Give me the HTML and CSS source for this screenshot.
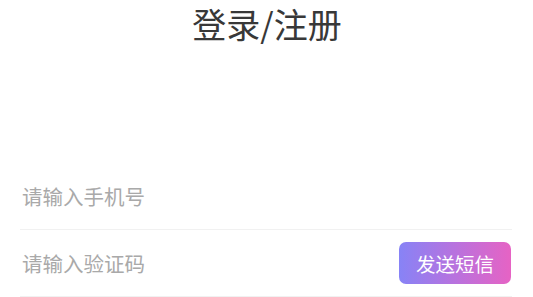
FILE: index.html
```html
<!DOCTYPE html>
<html lang="zh">
<head>
<meta charset="utf-8">
<link rel="stylesheet" href="styles.css">
</head>
<body>
<div class="page">
  <header class="title">登录/注册</header>
  <form class="form">
    <div class="row">
      <input class="field" type="text" placeholder="请输入手机号">
    </div>
    <div class="row">
      <input class="field" type="text" placeholder="请输入验证码">
      <button type="button" class="sms">发送短信</button>
    </div>
  </form>
</div>
</body>
</html>
```
FILE: styles.css
```css
html, body {
  margin: 0;
  padding: 0;
  background: #fff;
}
body {
  font-family: "Noto Sans CJK SC", "Noto Sans", sans-serif;
}
.page {
  width: 533px;
  height: 297px;
  overflow: hidden;
}
.title {
  display: flex;
  justify-content: center;
  font-size: 34px;
  line-height: normal;
  color: #383838;
  padding-left: 1px;
  margin-top: -1px;
}
.form {
  margin: 115px 21px 0 20px;
}
.row {
  height: 66px;
  border-bottom: 1px solid #f1f1f1;
  display: flex;
  align-items: center;
}
.field {
  flex: 1;
  min-width: 0;
  border: none;
  outline: none;
  background: transparent;
  font-family: inherit;
  font-size: 20.5px;
  color: #333;
  padding: 0 0 0 2px;
  height: 30px;
}
.field::placeholder {
  color: #a9a9a9;
}
.sms {
  width: 112px;
  height: 42px;
  border: none;
  border-radius: 7px;
  background: linear-gradient(90deg, #8783f6 0%, #b872de 50%, #e663c4 100%);
  color: #fff;
  font-family: inherit;
  font-size: 19.5px;
  padding: 0;
  margin-right: 1px;
}
```
